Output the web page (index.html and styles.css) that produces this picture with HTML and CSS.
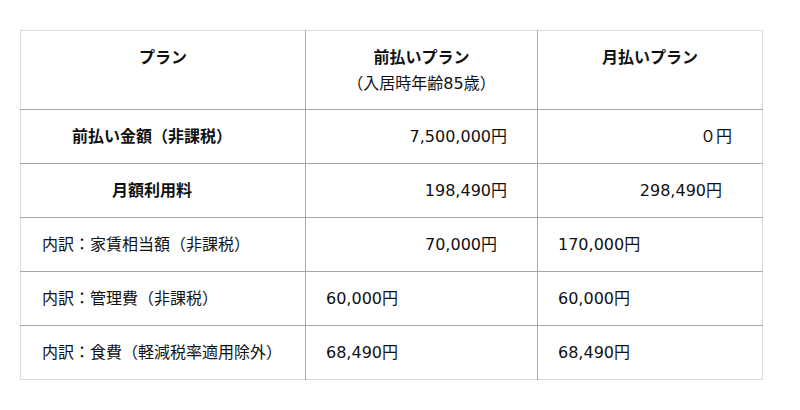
FILE: index.html
```html
<!DOCTYPE html>
<html lang="ja">
<head>
<meta charset="utf-8">
<link rel="stylesheet" href="styles.css">
</head>
<body>
<table class="plan-table">
  <colgroup>
    <col class="c1"><col class="c2"><col class="c3">
  </colgroup>
  <thead>
    <tr class="head-row">
      <th>プラン</th>
      <th>前払いプラン<br><span class="sub">（入居時年齢85歳）</span></th>
      <th>月払いプラン</th>
    </tr>
  </thead>
  <tbody>
    <tr>
      <td class="label-bold">前払い金額（非課税）</td>
      <td class="num-r30">7,500,000円</td>
      <td class="num-r30">０円</td>
    </tr>
    <tr>
      <td class="label-bold">月額利用料</td>
      <td class="num-r30">198,490円</td>
      <td class="num-r40">298,490円</td>
    </tr>
    <tr>
      <td class="label">内訳：家賃相当額（非課税）</td>
      <td class="num-r40">70,000円</td>
      <td class="num-l">170,000円</td>
    </tr>
    <tr>
      <td class="label">内訳：管理費（非課税）</td>
      <td class="num-l">60,000円</td>
      <td class="num-l">60,000円</td>
    </tr>
    <tr>
      <td class="label">内訳：食費（軽減税率適用除外）</td>
      <td class="num-l">68,490円</td>
      <td class="num-l">68,490円</td>
    </tr>
  </tbody>
</table>
</body>
</html>
```

FILE: styles.css
```css
html, body {
  margin: 0;
  background: #fff;
}
body {
  padding: 30px 20px;
  font-family: "DejaVu Sans", "Noto Sans CJK JP", sans-serif;
  font-size: 16px;
  color: #111;
}
.plan-table {
  border-collapse: collapse;
  table-layout: fixed;
  width: 742px;
  border: 1px solid #dcdcdc;
}
.c1 { width: 285px; }
.c2 { width: 232px; }
.c3 { width: 225px; }

.plan-table th,
.plan-table td {
  padding: 0;
  line-height: 24px;
  border-right: 1px solid #a8a8a8;
  border-bottom: 1px solid #a8a8a8;
  vertical-align: middle;
}
.plan-table tr > :last-child { border-right: none; }
.plan-table tbody tr:last-child td { border-bottom: none; }

.head-row th {
  height: 79px;
  vertical-align: top;
  padding-top: 14px;
  line-height: 26px;
  box-sizing: border-box;
  font-weight: bold;
  text-align: center;
}
.sub { font-weight: normal; }

.plan-table td { height: 54px; box-sizing: border-box; }

.label-bold {
  font-weight: bold;
  text-align: center;
  padding-right: 22px !important;
}
.label {
  text-align: left;
  padding-left: 21px !important;
}
.num-r30 { text-align: right; padding-right: 30px !important; }
.num-r40 { text-align: right; padding-right: 40px !important; }
.num-l { text-align: left; padding-left: 20px !important; }
```
